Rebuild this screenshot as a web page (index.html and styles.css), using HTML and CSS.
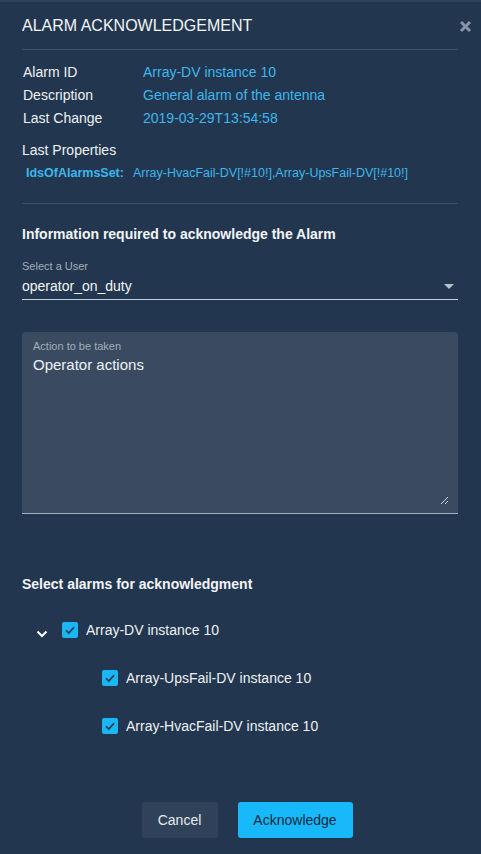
FILE: index.html
```html
<!DOCTYPE html>
<html>
<head>
<meta charset="utf-8">
<link rel="stylesheet" href="styles.css">
</head>
<body>
<div class="dialog">
  <header class="head">
    <h1 class="title">ALARM ACKNOWLEDGEMENT</h1>
    <span class="close">
      <svg width="13" height="13" viewBox="0 0 13 13"><path d="M2 2 L11 11 M11 2 L2 11" stroke="#8796a6" stroke-width="3" stroke-linecap="butt"/></svg>
    </span>
  </header>

  <div class="info">
    <span class="lbl">Alarm ID</span><span class="val">Array-DV instance 10</span>
    <span class="lbl">Description</span><span class="val">General alarm of the antenna</span>
    <span class="lbl">Last Change</span><span class="val">2019-03-29T13:54:58</span>
  </div>

  <div class="props-title">Last Properties</div>
  <div class="prop"><span class="prop-key">IdsOfAlarmsSet:</span><span class="prop-val">Array-HvacFail-DV[!#10!],Array-UpsFail-DV[!#10!]</span></div>

  <div class="divider"></div>

  <h2 class="section">Information required to acknowledge the Alarm</h2>

  <div class="select">
    <div class="small-label">Select a User</div>
    <div class="select-row">
      <span>operator_on_duty</span>
      <svg width="10" height="5" viewBox="0 0 10 5"><path d="M0 0 H10 L5 5 Z" fill="#b9c2cc"/></svg>
    </div>
  </div>

  <div class="textarea">
    <div class="small-label ta-label">Action to be taken</div>
    <div class="ta-text">Operator actions</div>
    <svg class="resize" width="8" height="8" viewBox="0 0 8 8"><path d="M1 8 L8 1 M5 8 L8 5" stroke="#cfd5db" stroke-width="1"/></svg>
  </div>

  <h2 class="section alarms-title">Select alarms for acknowledgment</h2>

  <ul class="tree">
    <li class="node">
      <span class="chev"><svg width="12" height="8" viewBox="0 0 12 8"><path d="M1.5 1.5 L6 6 L10.5 1.5" fill="none" stroke="#ffffff" stroke-width="2"/></svg></span>
      <span class="cb"><svg width="16" height="16" viewBox="0 0 16 16"><path d="M4 8.2 L6.8 11 L12 5.3" fill="none" stroke="#1f3450" stroke-width="1.6"/></svg></span>
      <span class="node-text">Array-DV instance 10</span>
    </li>
    <li class="node child">
      <span class="cb"><svg width="16" height="16" viewBox="0 0 16 16"><path d="M4 8.2 L6.8 11 L12 5.3" fill="none" stroke="#1f3450" stroke-width="1.6"/></svg></span>
      <span class="node-text">Array-UpsFail-DV instance 10</span>
    </li>
    <li class="node child">
      <span class="cb"><svg width="16" height="16" viewBox="0 0 16 16"><path d="M4 8.2 L6.8 11 L12 5.3" fill="none" stroke="#1f3450" stroke-width="1.6"/></svg></span>
      <span class="node-text">Array-HvacFail-DV instance 10</span>
    </li>
  </ul>

  <footer class="actions">
    <button class="btn cancel">Cancel</button>
    <button class="btn ack">Acknowledge</button>
  </footer>
</div>
</body>
</html>
```

FILE: styles.css
```css
* { box-sizing: border-box; }
html, body {
  margin: 0;
  padding: 0;
  background: #22374f;
}
body {
  border-top: 2px solid #2e4259;
  height: 854px;
  overflow: hidden;
  font-family: "Liberation Sans", Arial, sans-serif;
  color: #e6eaee;
}
.dialog {
  padding: 0 23px 0 22px;
}
.head {
  height: 48px;
  display: flex;
  align-items: center;
  justify-content: space-between;
  border-bottom: 1px solid #3d5169;
}
.title {
  margin: 0;
  font-size: 16px;
  font-weight: normal;
  color: #f2f4f6;
}
.close {
  display: flex;
  margin-right: -14px;
  margin-top: 1px;
}
.info {
  display: grid;
  grid-template-columns: 120px 1fr;
  margin-top: 11px;
  padding-left: 1px;
  font-size: 14px;
  line-height: 23px;
}
.lbl { color: #eef1f4; }
.val { color: #3fb5ec; }
.props-title {
  margin-top: 10px;
  font-size: 14px;
  line-height: 20px;
  color: #eef1f4;
}
.prop {
  margin-top: 5px;
  padding-left: 4px;
  font-size: 12.5px;
  line-height: 16px;
  color: #3fb5ec;
}
.prop-key {
  font-weight: bold;
  margin-right: 9px;
}
.divider {
  margin-top: 22px;
  border-top: 1px solid #3d5169;
}
.section {
  margin: 21px 0 0;
  font-size: 14px;
  font-weight: bold;
  line-height: 18px;
  color: #f2f4f6;
}
.select {
  margin-top: 17px;
}
.small-label {
  font-size: 11px;
  line-height: 13px;
  color: #a5aeb8;
}
.select-row {
  margin-top: 3px;
  display: flex;
  justify-content: space-between;
  align-items: center;
  font-size: 14px;
  line-height: 20px;
  padding-bottom: 3px;
  border-bottom: 1px solid #c9d0d7;
  color: #f2f4f6;
}
.select-row svg {
  margin-right: 4px;
  margin-top: 1px;
}
.textarea {
  position: relative;
  margin-top: 32px;
  height: 182px;
  background: #3a4b61;
  border-radius: 4px 4px 0 0;
  border-bottom: 1px solid #a6b0bb;
  padding: 8px 11px;
}
.ta-label {
  color: #a3adb8;
}
.ta-text {
  margin-top: 3px;
  font-size: 15px;
  line-height: 18px;
  color: #eef1f4;
}
.resize {
  position: absolute;
  right: 10px;
  bottom: 9px;
}
.alarms-title {
  margin-top: 61px;
}
.tree {
  list-style: none;
  margin: 13px 0 0;
  padding: 0;
}
.node {
  height: 48px;
  display: flex;
  align-items: center;
  font-size: 14px;
  color: #eef1f4;
}
.chev {
  display: flex;
  width: 40px;
  padding-left: 14px;
  margin-top: 8px;
}
.child {
  padding-left: 80px;
}
.cb {
  display: flex;
  width: 16px;
  height: 16px;
  background: #1bb6f2;
  border-radius: 2px;
  margin-right: 8px;
}
.node-text {
  line-height: 18px;
}
.actions {
  margin-top: 52px;
  margin-right: -14px;
  display: flex;
  justify-content: center;
  gap: 20px;
}
.btn {
  height: 36px;
  border: none;
  border-radius: 3px;
  font-family: "Liberation Sans", Arial, sans-serif;
  font-size: 14px;
  padding: 0;
}
.cancel {
  width: 76px;
  background: #2f4259;
  color: #e6eaee;
}
.ack {
  width: 115px;
  background: #17b9fb;
  color: #142a40;
}
```
